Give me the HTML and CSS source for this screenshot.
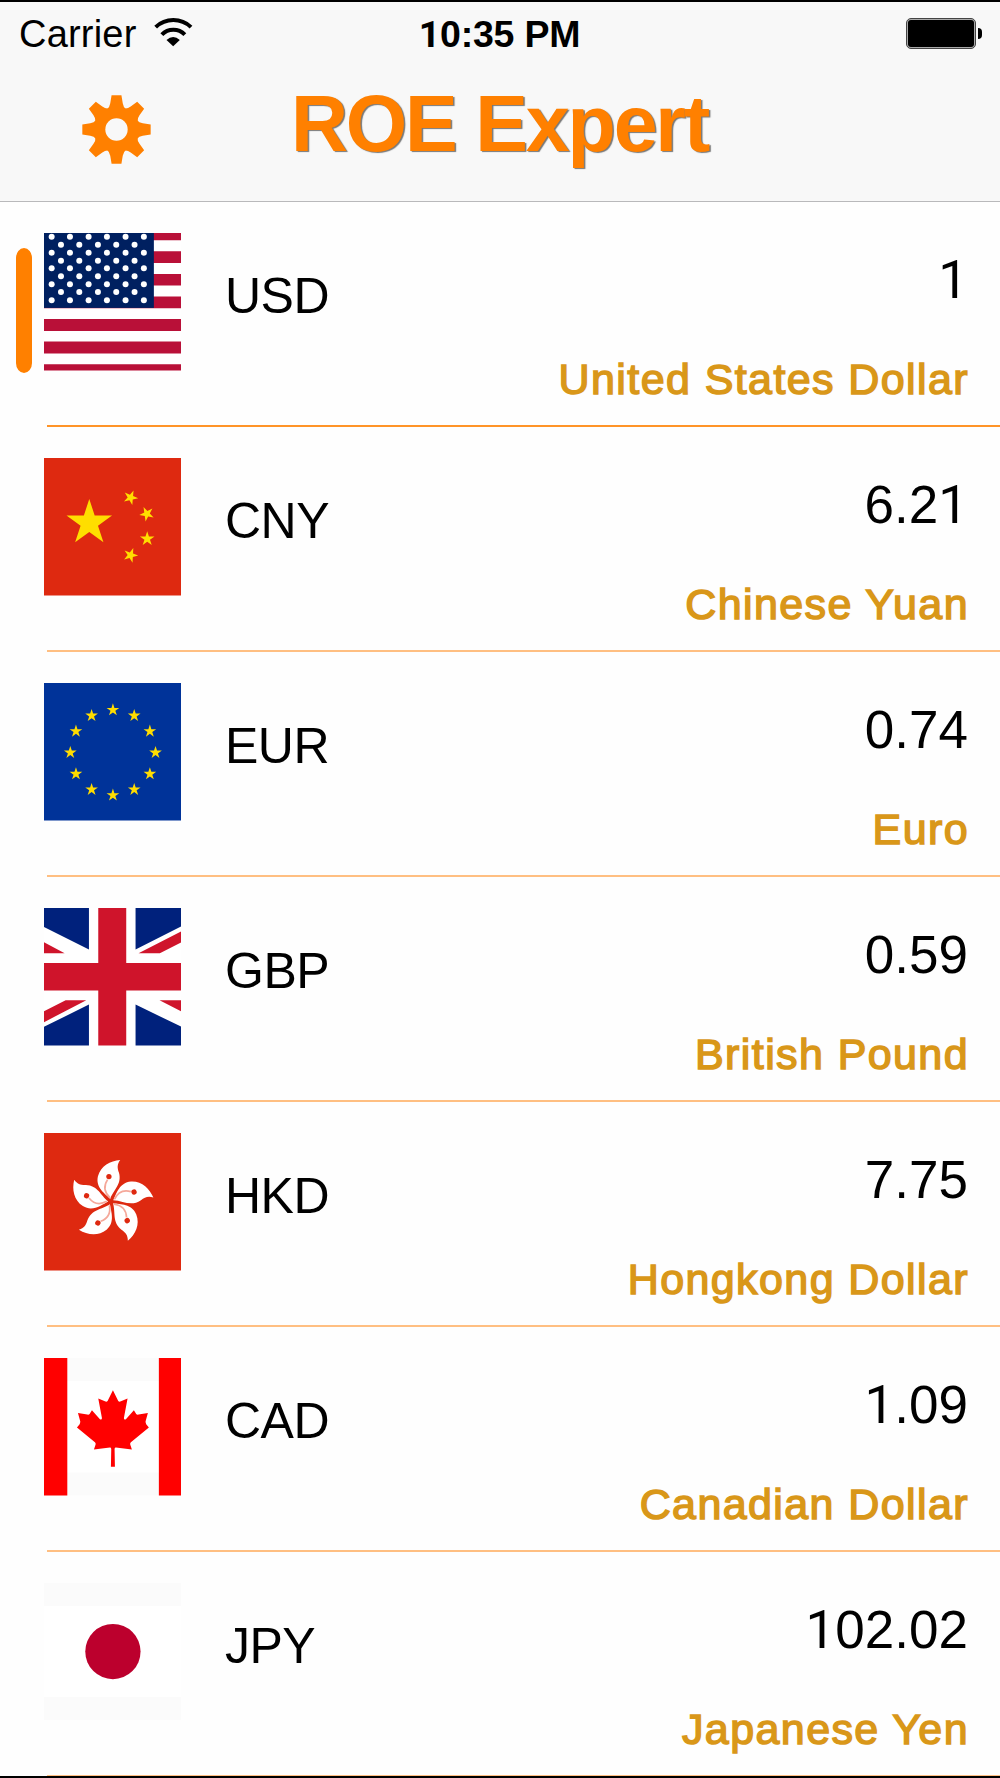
FILE: index.html
```html
<!DOCTYPE html>
<html lang="en">
<head>
<meta charset="UTF-8" />
<meta name="viewport" content="width=device-width, initial-scale=1.0" />
<title>ROE Expert</title>
<link rel="stylesheet" href="styles.css">
</head>
<body>
<svg class="defs" width="0" height="0">
<defs>
<polygon id="star" points="0,-10 2.25,-3.1 9.5,-3.1 3.63,1.2 5.9,8.1 0,3.8 -5.9,8.1 -3.63,1.2 -9.5,-3.1 -2.25,-3.1" />
<path id="tooth" d="M-15,-104H15L19,-80Q21,-68 28,-63L0,0L-28,-63Q-21,-68 -19,-80Z" />
<g id="five">
<circle cx="51" r="9" /><circle cx="106" r="9" /><circle cx="162" r="9" /><circle cx="217" r="9" /><circle cx="272" r="9" />
</g>
<g id="six">
<circle cx="23" r="9" /><circle cx="78" r="9" /><circle cx="134" r="9" /><circle cx="189" r="9" /><circle cx="245" r="9" /><circle cx="300" r="9" />
</g>
<g id="petal">
<path fill="#fff" d="M-2,-8C-18,-24 -47,-42 -39,-76C-31,-107 -2,-123 28,-125C18,-112 19,-101 24,-87C34,-52 8,-36 -2,-8Z" />
<path fill="none" stroke="#f5a89a" stroke-width="5" d="M-3,-12C-22,-30 -22,-48 -10,-66" />
<circle cx="-6" cy="-75" r="8" fill="#de2910" />
</g>
</defs>
</svg>

<header class="header">
<div class="status">
<div class="carrier">Carrier
<svg class="wifi" viewBox="460 50 116 90">
<path fill="none" stroke="#000" stroke-width="12" d="M464.500,80.500A77,77 0 0 1 570.500,80.500M483,103A48,48 0 0 1 552,103" />
<path d="M497,119Q517,101 537,119L517,138Z" />
</svg>
</div>
<div class="time"><span class="one">1</span>0:35 PM</div>
<div class="battery"><div class="battery-body"><div class="battery-fill"></div></div><div class="battery-tip"></div></div>
</div>
<div class="nav">
<svg class="gear" viewBox="-105 -105 210 210">
<g fill="#ff8000">
<use href="#tooth" /><use href="#tooth" transform="rotate(45)" /><use href="#tooth" transform="rotate(90)" /><use href="#tooth" transform="rotate(135)" />
<use href="#tooth" transform="rotate(180)" /><use href="#tooth" transform="rotate(225)" /><use href="#tooth" transform="rotate(270)" /><use href="#tooth" transform="rotate(315)" />
<circle r="64" />
</g>
<circle r="34" fill="#f8f8f8" />
</svg>
<h1>ROE Expert</h1>
</div>
</header>

<main class="list">
<div class="row selected">
<svg class="flag" viewBox="0 0 413 413">
<rect width="413" height="413" fill="#fff" />
<path fill="#b91038" d="M0,0H413V22H0ZM0,55H413V90H0ZM0,123H413V158H0ZM0,191H413V226H0ZM0,258H413V294H0ZM0,326H413V362H0ZM0,394H413V413H0Z" />
<rect width="330" height="225" fill="#002060" />
<g fill="#fff">
<use href="#six" y="11" /><use href="#five" y="35" /><use href="#six" y="59" /><use href="#five" y="83" /><use href="#six" y="106" />
<use href="#five" y="130" /><use href="#six" y="154" /><use href="#five" y="177" /><use href="#six" y="202" />
</g>
</svg>
<div class="code">USD</div>
<div class="info">
<div class="value"><span class="one">1</span></div>
<div class="name">United States Dollar</div>
</div>
</div>

<div class="row">
<svg class="flag" viewBox="0 0 413 413">
<rect width="413" height="413" fill="#de2910" />
<g fill="#ffde00">
<use href="#star" transform="translate(136 195) scale(7.2)" />
<use href="#star" transform="translate(260 119) rotate(23) scale(2.3)" />
<use href="#star" transform="translate(309 168) rotate(46) scale(2.3)" />
<use href="#star" transform="translate(310 243) scale(2.3)" />
<use href="#star" transform="translate(260 292) rotate(21) scale(2.3)" />
</g>
</svg>
<div class="code">CNY</div>
<div class="info">
<div class="value">6.2<span class="one">1</span></div>
<div class="name">Chinese Yuan</div>
</div>
</div>

<div class="row">
<svg class="flag" viewBox="0 0 413 413">
<rect width="413" height="413" fill="#039" />
<g fill="#fd0">
<use href="#star" transform="translate(207 81) scale(2)" />
<use href="#star" transform="translate(271 98) scale(2)" />
<use href="#star" transform="translate(318 145) scale(2)" />
<use href="#star" transform="translate(335 209) scale(2)" />
<use href="#star" transform="translate(318 273) scale(2)" />
<use href="#star" transform="translate(271 320) scale(2)" />
<use href="#star" transform="translate(207 337) scale(2)" />
<use href="#star" transform="translate(143 320) scale(2)" />
<use href="#star" transform="translate(96 273) scale(2)" />
<use href="#star" transform="translate(79 209) scale(2)" />
<use href="#star" transform="translate(96 145) scale(2)" />
<use href="#star" transform="translate(143 98) scale(2)" />
</g>
</svg>
<div class="code">EUR</div>
<div class="info">
<div class="value">0.74</div>
<div class="name">Euro</div>
</div>
</div>

<div class="row">
<svg class="flag" viewBox="0 0 413 413">
<rect width="413" height="413" fill="#fff" />
<path fill="#00217c" d="M0,0H135V125L0,57ZM275,0H413V55L275,125ZM0,413V357L135,290V413ZM275,413V290L413,357V413Z" />
<path fill="#cf142b" d="M163,0H247V413H163ZM0,165H413V248H0ZM0,103L62,136H0ZM284,136L413,70V103L348,136ZM0,310L65,277H127L0,343ZM347,277H413V311Z" />
</svg>
<div class="code">GBP</div>
<div class="info">
<div class="value">0.59</div>
<div class="name">British Pound</div>
</div>
</div>

<div class="row">
<svg class="flag" viewBox="0 0 413 413">
<rect width="413" height="413" fill="#de2910" />
<g transform="translate(201 206)">
<use href="#petal" /><use href="#petal" transform="rotate(72)" /><use href="#petal" transform="rotate(144)" /><use href="#petal" transform="rotate(216)" /><use href="#petal" transform="rotate(288)" />
</g>
</svg>
<div class="code">HKD</div>
<div class="info">
<div class="value">7.75</div>
<div class="name">Hongkong Dollar</div>
</div>
</div>

<div class="row">
<svg class="flag" viewBox="0 0 413 413">
<rect width="413" height="413" fill="#fbfbfb" />
<rect y="69" width="413" height="275" fill="#fff" />
<path fill="red" d="M0,0H70V413H0ZM345,0H413V413H345Z" />
<path fill="red" d="M207,97L223,129Q226,133 231,130L251,122L240,180Q240,187 246,184L270,157L277,168Q279,171 284,170L312,165L305,191Q305,195 307,199L315,209L261,253Q258,256 259,260L264,275L216,269Q212,269 212,273L213,327H201L202,273Q202,269 198,269L150,275L155,260Q156,256 153,253L99,209L107,199Q109,195 109,191L102,165L130,170Q135,171 137,168L144,157L168,184Q174,187 174,180L163,122L183,130Q188,133 191,129Z" />
</svg>
<div class="code">CAD</div>
<div class="info">
<div class="value"><span class="one">1</span>.09</div>
<div class="name">Canadian Dollar</div>
</div>
</div>

<div class="row">
<svg class="flag" viewBox="0 0 413 413">
<rect width="413" height="411" fill="#fbfbfb" />
<rect y="69" width="413" height="274" fill="#fff" />
<circle cx="207" cy="206" r="83" fill="#bc002d" />
</svg>
<div class="code">JPY</div>
<div class="info">
<div class="value"><span class="one">1</span>02.02</div>
<div class="name">Japanese Yen</div>
</div>
</div>
</main>
</body>
</html>
```
FILE: styles.css
```css
* {
  box-sizing: border-box;
}

body {
  margin: 0;
  width: 1000px;
  height: 1778px;
  overflow: hidden;
  display: flex;
  flex-direction: column;
  font-family: "Liberation Sans", Arial, sans-serif;
  background-color: #fefefe;
  color: #000;
  border-top: 2px solid #000;
  border-bottom: 2px solid #000;
}

.defs {
  position: absolute;
}

.header {
  height: 200px;
  flex: none;
  background-color: #f8f8f8;
  border-bottom: 1px solid #b9b9bb;
}

/* status bar */
.status {
  display: grid;
  grid-template-columns: 1fr auto 1fr;
  height: 64px;
  padding: 0 20px 0 19px;
}

.carrier {
  display: flex;
  gap: 17px;
  font-size: 38px;
  line-height: 65px;
  letter-spacing: 0.2px;
}

.wifi {
  width: 39px;
  height: 30px;
  margin-top: 15px;
}

.time {
  font-size: 37.5px;
  line-height: 65px;
  font-weight: bold;
  letter-spacing: -0.2px;
}

.battery {
  display: flex;
  justify-content: flex-end;
  gap: 2px;
  padding-top: 16px;
  margin-right: -2px;
}

.battery-body {
  width: 70px;
  height: 31px;
  padding: 1px;
  border: 1px solid #444;
  border-radius: 5px;
  background-color: #aaa;
}

.battery-fill {
  height: 100%;
  border-radius: 3px;
  background-color: #000;
}

.battery-tip {
  width: 4px;
  height: 11px;
  margin-top: 10px;
  border-radius: 0 4px 4px 0;
  background-color: #000;
}

/* title bar */
.nav {
  display: flex;
  padding-left: 82px;
}

.gear {
  width: 69px;
  height: 69px;
  margin-top: 29px;
}

h1 {
  margin: 13px 0 0 140px;
  font-size: 79px;
  line-height: 90px;
  letter-spacing: -2.2px;
  font-weight: bold;
  color: #ff8000;
  text-shadow: 1.5px 1px 1px #777;
}

/* currency rows */
.list {
  flex: 1;
  min-height: 0;
  overflow: hidden;
}

.row {
  position: relative;
  display: flex;
  height: 225px;
  padding: 0 32px 0 43.5px;
}

.row::after {
  content: "";
  position: absolute;
  left: 47px;
  right: 0;
  bottom: 0;
  height: 2px;
  background-color: #ffbf82;
}

.selected::after {
  background-color: #ff9428;
}

.selected::before {
  content: "";
  position: absolute;
  left: 15.5px;
  top: 46px;
  width: 16px;
  height: 125px;
  border-radius: 8px / 10px;
  background-color: #ff8000;
}

.flag {
  flex: none;
  width: 137.5px;
  height: 137.5px;
  margin-top: 31px;
}

.code {
  margin: 64px 0 0 44px;
  font-size: 50px;
  line-height: 60px;
  letter-spacing: -0.5px;
}

.info {
  flex: 1;
  text-align: right;
}

.value {
  margin-top: 48px;
  font-size: 53px;
  line-height: 60px;
}

.name {
  margin: 44px -1px 0 0;
  font-size: 43px;
  line-height: 50px;
  letter-spacing: 1.4px;
  color: #d99719;
  -webkit-text-stroke: 1.5px #d99719;
}

/* numeral without a foot */
.one {
  font-family: Roboto, sans-serif;
}
```
